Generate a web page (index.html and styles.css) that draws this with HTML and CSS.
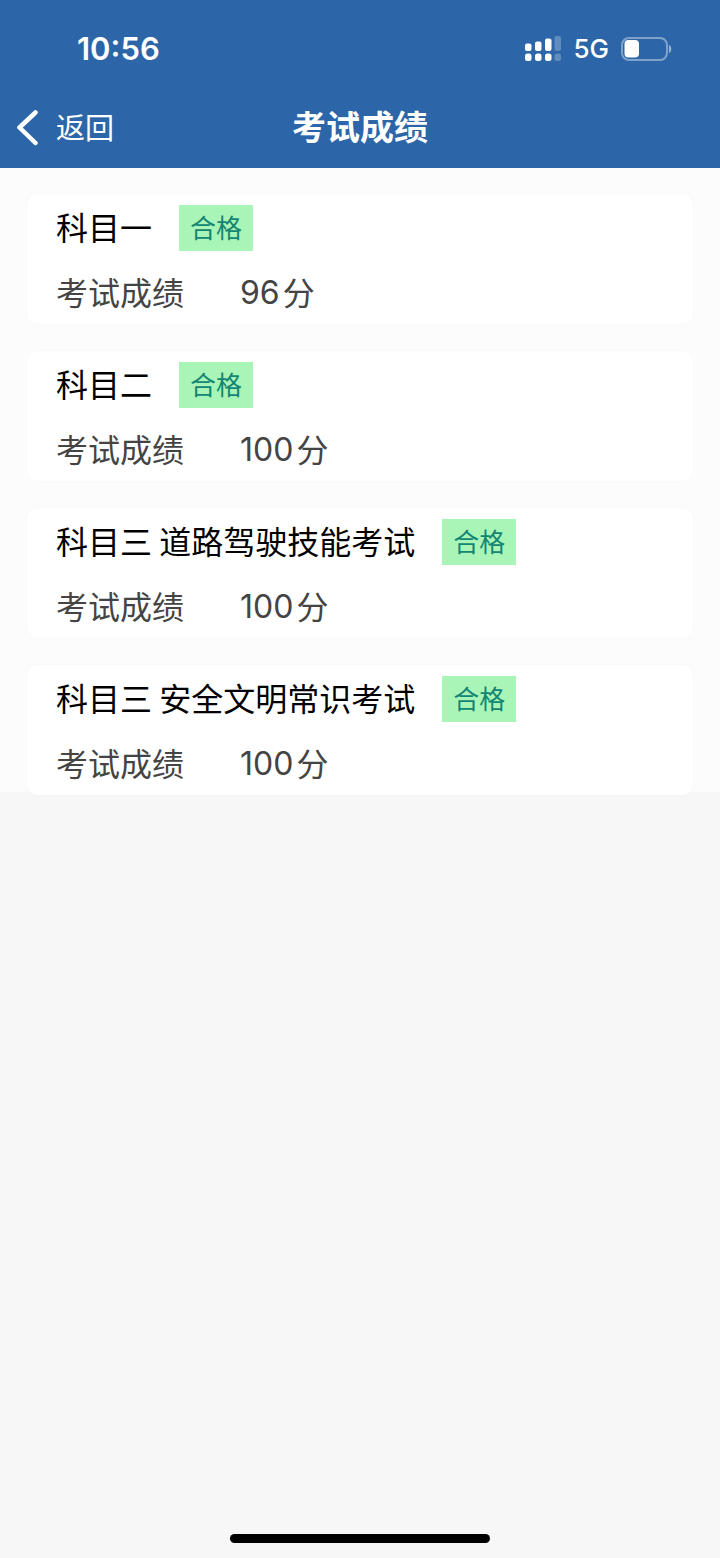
FILE: index.html
```html
<!DOCTYPE html>
<html lang="zh-CN">
<head>
<meta charset="utf-8">
<meta name="viewport" content="width=device-width, initial-scale=1">
<title>考试成绩</title>
<link rel="stylesheet" href="styles.css">
</head>
<body>
<div class="app">
  <header class="header">
    <div class="status">
      <time class="clock">10:56</time>
      <div class="indicators">
        <svg class="signal" width="36" height="25" viewBox="0 0 36 25" fill="#fff" aria-hidden="true">
          <rect x="0" y="7.500" width="6.500" height="7.500" rx="2"/>
          <rect x="10" y="5.500" width="6.500" height="9.500" rx="2"/>
          <rect x="20" y="2.500" width="6.500" height="12.500" rx="2"/>
          <rect x="29.500" y="0" width="6.500" height="15" rx="2" opacity=".25"/>
          <rect x="0" y="17.500" width="6.500" height="7.500" rx="2.500"/>
          <rect x="10" y="17.500" width="6.500" height="7.500" rx="2.500"/>
          <rect x="20" y="17.500" width="6.500" height="7.500" rx="2.500"/>
          <rect x="29.500" y="17.500" width="6.500" height="7.500" rx="2.500" opacity=".25"/>
        </svg>
        <span class="network">5G</span>
        <svg class="battery" width="51" height="24" viewBox="0 0 51 24" aria-hidden="true">
          <rect x="1" y="1" width="45" height="22" rx="7" fill="none" stroke="#fff" stroke-width="2" opacity=".4"/>
          <rect x="3.500" y="3" width="14.500" height="17.500" rx="4" fill="#fff"/>
          <path d="M48 8c3 1 3 7 0 8z" fill="#fff" opacity=".5"/>
        </svg>
      </div>
    </div>
    <nav class="nav">
      <button class="back" type="button">
        <svg width="22" height="36" viewBox="0 0 22 36" fill="none" stroke="#fff" stroke-width="4.500" stroke-linecap="round" stroke-linejoin="round" aria-hidden="true"><path d="M19.500 2.500 3.500 17.500l16 15.500"/></svg>
        <span class="back-label">返回</span>
      </button>
      <h1 class="title">考试成绩</h1>
    </nav>
  </header>
  <main class="results">
    <section class="card">
      <div class="subject"><h2 class="name">科目一</h2><span class="badge">合格</span></div>
      <div class="score"><span>考试成绩</span><span class="value"><span class="number">96</span>分</span></div>
    </section>
    <section class="card">
      <div class="subject"><h2 class="name">科目二</h2><span class="badge">合格</span></div>
      <div class="score"><span>考试成绩</span><span class="value"><span class="number">100</span>分</span></div>
    </section>
    <section class="card">
      <div class="subject"><h2 class="name">科目三 道路驾驶技能考试</h2><span class="badge">合格</span></div>
      <div class="score"><span>考试成绩</span><span class="value"><span class="number">100</span>分</span></div>
    </section>
    <section class="card">
      <div class="subject"><h2 class="name">科目三 安全文明常识考试</h2><span class="badge">合格</span></div>
      <div class="score"><span>考试成绩</span><span class="value"><span class="number">100</span>分</span></div>
    </section>
  </main>
  <footer class="footer"><div class="home-bar"></div></footer>
</div>
</body>
</html>
```
FILE: styles.css
```css
* {
  box-sizing: border-box;
}

body {
  margin: 0;
  background: #f7f7f7;
  color: #000;
  font-family: "Noto Sans CJK SC", sans-serif;
  font-size: 32px;
  line-height: 48px;
}

h1,
h2 {
  margin: 0;
  font: inherit;
}

.app {
  display: flex;
  flex-direction: column;
  min-height: 100vh;
}

.header {
  background: #2c66a9;
  color: #fff;
}

.status {
  display: flex;
  align-items: center;
  justify-content: space-between;
  height: 88px;
  padding: 9px 48px 0 77px;
}

.clock {
  font-family: Inter, sans-serif;
  font-size: 31px;
  font-weight: 600;
}

.indicators {
  display: flex;
  align-items: center;
  gap: 12px;
}

.network {
  font-family: Inter, sans-serif;
  font-size: 26px;
  font-weight: 500;
}

.nav {
  display: grid;
  grid-template-columns: 1fr auto 1fr;
  align-items: center;
  height: 80px;
  padding: 0 16px;
}

.back {
  display: flex;
  align-items: center;
  justify-self: start;
  gap: 18px;
  padding: 0;
  border: 0;
  background: none;
  color: inherit;
  font: inherit;
  font-size: 29px;
}

.back-label {
  padding-bottom: 4px;
}

.title {
  padding-bottom: 4px;
  font-size: 34px;
  font-weight: 700;
}

.results {
  display: grid;
  gap: 27px;
  padding: 26px 27px 0;
  background: #fcfcfc;
}

.card {
  padding: 11px 29px 5px;
  border-radius: 10px;
  background: #fff;
  box-shadow: 0 0 2px #f3f3f3;
}

.card:last-child {
  margin-bottom: -3px;
}

.subject {
  display: flex;
  align-items: center;
  gap: 27px;
  margin-bottom: 16px;
}

.name {
  padding-bottom: 4px;
  line-height: 42px;
}

.badge {
  padding: 0 11px 2px;
  background: #a9f5b7;
  color: #128573;
  font-size: 26px;
  line-height: 44px;
}

.score {
  display: flex;
  gap: 56px;
  color: #444;
}

.value {
  display: flex;
  gap: 3px;
}

.number {
  font-family: Inter, sans-serif;
  line-height: 52px;
}

.footer {
  display: flex;
  justify-content: center;
  margin-top: auto;
  padding: 15px 0;
}

.home-bar {
  width: 36%;
  height: 9px;
  border-radius: 5px;
  background: #000;
}
```
